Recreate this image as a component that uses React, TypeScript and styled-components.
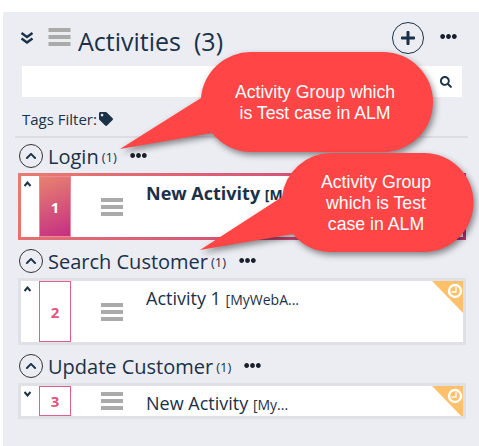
import React from 'react';
import styled, { createGlobalStyle } from 'styled-components';
import { FaChevronUp, FaSearch, FaTag, FaPlus, FaEllipsisH } from 'react-icons/fa';

const GlobalStyle = createGlobalStyle`
  html, body {
    margin: 0;
    padding: 0;
    background: #fff;
    overflow: hidden;
  }
  body {
    font-family: "Open Sans", "Liberation Sans", sans-serif;
    color: #1a3148;
  }
`;

const groups = [
  { name: 'Login', count: 1, cards: { num: 1, title: 'New Activity', tag: '[M', active: true, tall: true, up: true } },
  { name: 'Search Customer', count: 1, cards: { num: 2, title: 'Activity 1', tag: '[MyWebA...', active: false, tall: true, up: true } },
  { name: 'Update Customer', count: 1, cards: { num: 3, title: 'New Activity', tag: '[My...', active: false, tall: false, up: false } },
];

function MenuLines(props: { width: number; height: number }) {
  return (
    <svg width={props.width} height={props.height} viewBox="0 0 22 18">
      <rect x="0" y="0" width="22" height="4" fill="#aaaaaa" />
      <rect x="0" y="7" width="22" height="4" fill="#aaaaaa" />
      <rect x="0" y="14" width="22" height="4" fill="#aaaaaa" />
    </svg>
  );
}

function Corner() {
  return (
    <CornerWrap>
      <svg width="31" height="32" viewBox="0 0 31 32">
        <polygon points="0,0 31,0 31,32" fill="#ffc06a" />
        <circle cx="23" cy="10" r="6" fill="#ffc06a" stroke="#fff" strokeWidth="2.4" />
        <path d="M24 6 V11 H19.5" fill="none" stroke="#fff" strokeWidth="1.4" />
      </svg>
    </CornerWrap>
  );
}

export default function App() {
  return (
    <>
      <GlobalStyle />
      <Page>
        <Panel>
          <Header>
            <DoubleChevron width="14" height="13" viewBox="0 0 14 13">
              <path d="M1.5 2 L7 6 L12.5 2 M1.5 7.5 L7 11.5 L12.5 7.5" fill="none" stroke="#1a3148" strokeWidth="2.4" />
            </DoubleChevron>
            <HeaderMenu>
              <MenuLines width={23} height={18} />
            </HeaderMenu>
            <HeaderTitle>Activities</HeaderTitle>
            <HeaderCount>(3)</HeaderCount>
            <AddButton>
              <FaPlus size={16} />
            </AddButton>
            <HeaderDots>
              <Dots $size={17} />
            </HeaderDots>
          </Header>
          <SearchBox>
            <FaSearch size={12} color="#1a3148" />
          </SearchBox>
          <TagsRow>
            Tags Filter:
            <FaTag size={14} color="#1a3148" />
          </TagsRow>
          <Divider />
          {groups.map((g) => (
            <Group key={g.name}>
              <GroupHeader>
                <RoundToggle>
                  <FaChevronUp size={12} />
                </RoundToggle>
                <GroupName>{g.name}</GroupName>
                <GroupCount>({g.count})</GroupCount>
                <Dots $size={17} />
              </GroupHeader>
              <Card $active={g.cards.active} $tall={g.cards.tall}>
                <CardInner>
                  <Collapse>
                    <svg width="7" height="6" viewBox="0 0 7 6">
                      <path d={g.cards.up ? 'M0.5 5 L3.5 1.5 L6.5 5' : 'M0.5 1 L3.5 4.5 L6.5 1'} fill="none" stroke="#1a3148" strokeWidth="2" />
                    </svg>
                  </Collapse>
                  <NumberBox $active={g.cards.active}>
                    <NumberText $active={g.cards.active}>{g.cards.num}</NumberText>
                  </NumberBox>
                  <CardMenu>
                    <MenuLines width={22} height={18} />
                  </CardMenu>
                  <CardTitle $active={g.cards.active}>
                    {g.cards.title} <CardTag $active={g.cards.active}>{g.cards.tag}</CardTag>
                  </CardTitle>
                  <Corner />
                </CardInner>
              </Card>
            </Group>
          ))}
        </Panel>
        <CalloutOne>
          <CalloutShape width="330" height="120" viewBox="0 0 330 120">
            <path
              d="M 133 4 H 265 A 50 50 0 0 1 265 104 H 133 A 50 50 0 0 1 94 85 L 2 101 L 83 50 A 50 50 0 0 1 133 4 Z"
              fill="#ff4545"
            />
          </CalloutShape>
          <CalloutText $width={220} $left={87} $top={34}>
            Activity Group which<br />is Test case in ALM
          </CalloutText>
        </CalloutOne>
        <CalloutTwo>
          <CalloutShape width="300" height="120" viewBox="0 0 300 120">
            <path
              d="M 133 2 H 226 A 49.5 49.5 0 0 1 226 101 H 133 A 49.5 49.5 0 0 1 95 83 L 2 99 L 84 46 A 49.5 49.5 0 0 1 133 2 Z"
              fill="#ff4545"
            />
          </CalloutShape>
          <CalloutText $width={160} $left={98} $top={21}>
            Activity Group<br />which is Test<br />case in ALM
          </CalloutText>
        </CalloutTwo>
      </Page>
    </>
  );
}

const Page = styled.div`
  position: relative;
  width: 479px;
  height: 446px;
  padding: 12px 0 0 3px;
  box-sizing: border-box;
  overflow: hidden;
`;

const Panel = styled.div`
  background: #ebedf3;
  height: 434px;
  padding: 10px 11px 0 12px;
  box-sizing: border-box;
`;

const Header = styled.div`
  display: flex;
  align-items: flex-start;
  height: 44px;
  padding: 0 11px 0 5px;
`;

const DoubleChevron = styled.svg`
  margin-top: 9px;
  flex: none;
`;

const HeaderMenu = styled.div`
  display: flex;
  margin: 6px 0 0 14px;
`;

const HeaderTitle = styled.div`
  font-size: 25px;
  line-height: 32px;
  margin: 3px 0 0 7px;
`;

const HeaderCount = styled.div`
  font-size: 25px;
  line-height: 32px;
  margin: 3px 0 0 13px;
`;

const AddButton = styled.div`
  margin-left: auto;
  width: 32px;
  height: 32px;
  border: 1.5px solid #1a3148;
  border-radius: 50%;
  box-sizing: border-box;
  display: flex;
  align-items: center;
  justify-content: center;
`;

const HeaderDots = styled.div`
  display: flex;
  margin: 6px 0 0 16px;
`;

const Dots = styled(FaEllipsisH).attrs<{ $size: number }>((p) => ({ size: p.$size }))`
  color: #1a1f2b;
  flex: none;
`;

const SearchBox = styled.div`
  margin-left: 7px;
  width: 440px;
  height: 31px;
  background: #fff;
  display: flex;
  align-items: center;
  justify-content: flex-end;
  padding-right: 10px;
  box-sizing: border-box;
`;

const TagsRow = styled.div`
  display: flex;
  align-items: center;
  gap: 2px;
  margin: 12px 0 0 7px;
  font-size: 15px;
  line-height: 20px;
  height: 20px;
`;

const Divider = styled.div`
  height: 2px;
  background: #dcdde3;
  margin-top: 7px;
`;

const Group = styled.div`
  display: flex;
  flex-direction: column;
  & + & {
    margin-top: 3px;
  }
`;

const GroupHeader = styled.div`
  display: flex;
  align-items: center;
  height: 35px;
  padding-left: 4px;
`;

const RoundToggle = styled.div`
  width: 24px;
  height: 24px;
  border: 1.5px solid #333;
  border-radius: 50%;
  box-sizing: border-box;
  display: flex;
  align-items: center;
  justify-content: center;
  flex: none;
`;

const GroupName = styled.div`
  font-size: 20px;
  margin: 2px 0 0 5px;
`;

const GroupCount = styled.div`
  font-size: 13px;
  margin: 3px 13px 0 3px;
`;

const Card = styled.div<{ $active: boolean; $tall: boolean }>`
  margin: 0 2px 0 3px;
  height: ${(p) => (p.$tall ? '67px' : '36px')};
  padding: 3px;
  box-sizing: border-box;
  background: ${(p) => (p.$active ? 'linear-gradient(135deg, #ea7a70, #c2327f)' : '#e0e1e7')};
`;

const CardInner = styled.div`
  position: relative;
  background: #fff;
  height: 100%;
  display: flex;
  overflow: hidden;
`;

const Collapse = styled.div`
  display: flex;
  align-items: flex-start;
  width: 18px;
  padding: 5px 0 0 3px;
  box-sizing: border-box;
  flex: none;
`;

const NumberBox = styled.div<{ $active: boolean }>`
  width: 32px;
  flex: none;
  box-sizing: border-box;
  border: 1px solid ${(p) => (p.$active ? '#ec8a9a' : '#e0608a')};
  background: ${(p) => (p.$active ? 'linear-gradient(160deg, #e8826f, #c42f83)' : '#fff')};
  display: flex;
  align-items: center;
  justify-content: center;
`;

const NumberText = styled.span<{ $active: boolean }>`
  font-size: 15px;
  font-weight: 700;
  color: ${(p) => (p.$active ? '#fff' : '#e0567f')};
`;

const CardMenu = styled.div`
  width: 22px;
  margin-left: 30px;
  flex: none;
  display: flex;
  align-items: center;
  align-self: stretch;
`;

const CardTitle = styled.div<{ $active: boolean }>`
  margin: 5px 0 0 23px;
  font-size: 18px;
  line-height: 24px;
  font-weight: ${(p) => (p.$active ? 700 : 400)};
  white-space: nowrap;
`;

const CardTag = styled.span<{ $active: boolean }>`
  font-size: 14px;
  font-weight: ${(p) => (p.$active ? 700 : 400)};
`;

const CornerWrap = styled.div`
  position: absolute;
  top: 0;
  right: 0;
  display: flex;
`;

const CalloutOne = styled.div`
  position: absolute;
  left: 118px;
  top: 48px;
  width: 330px;
  height: 120px;
`;

const CalloutTwo = styled.div`
  position: absolute;
  left: 198px;
  top: 151px;
  width: 300px;
  height: 120px;
`;

const CalloutShape = styled.svg`
  display: block;
  overflow: visible;
  filter: drop-shadow(2px 3px 3px rgba(0, 0, 0, 0.45));
`;

const CalloutText = styled.div<{ $width: number; $left: number; $top: number }>`
  position: absolute;
  left: ${(p) => p.$left}px;
  top: ${(p) => p.$top}px;
  width: ${(p) => p.$width}px;
  font-family: "Liberation Sans", Arial, sans-serif;
  font-size: 17.7px;
  line-height: 21px;
  color: #fff;
  text-align: center;
`;
